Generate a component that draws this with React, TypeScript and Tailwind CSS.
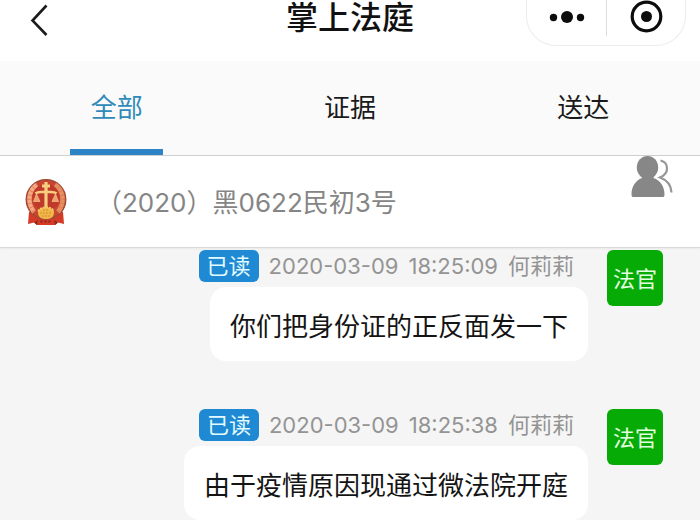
import clsx from "clsx";

const tabs = ["全部", "证据", "送达"];

const messages = [
  { date: "2020-03-09", time: "18:25:09", name: "何莉莉", role: "法官", text: "你们把身份证的正反面发一下" },
  { date: "2020-03-09", time: "18:25:38", name: "何莉莉", role: "法官", text: "由于疫情原因现通过微法院开庭" },
];

const CourtEmblem = () => (
  <svg className="h-12 w-[42px] shrink-0" viewBox="0 0 42 48" aria-hidden="true">
    {/* ribbon */}
    <path d="M4 34 L3 46 L9 44.500 L12 47 L30 47 L33 44.500 L39 46 L38 34 Z" fill="#d43a26" />
    <path d="M9 44.500 L13 42 L12 47 Z M33 44.500 L29 42 L30 47 Z" fill="#8f2a1c" />
    <circle cx="21" cy="21.500" r="19.700" fill="#c9452f" stroke="#a04a35" strokeWidth="1.500" />
    {/* wheat */}
    <path d="M12 6.500 C3 13 2 25 9 34" fill="none" stroke="#f4a984" strokeWidth="4.500" />
    <path d="M30 6.500 C39 13 40 25 33 34" fill="none" stroke="#e58f62" strokeWidth="4.500" />
    <path d="M12 6.500 C3 13 2 25 9 34 M30 6.500 C39 13 40 25 33 34" fill="none" stroke="#dd7650" strokeWidth="4.500" strokeDasharray="0.700 3.500" />
    <circle cx="21" cy="19.500" r="13.500" fill="#bf3a2a" />
    {/* scales */}
    <path d="M21 4 V31" stroke="#f8cf80" strokeWidth="3.200" />
    <path d="M17 8 H25" stroke="#f8cf80" strokeWidth="3" />
    <path d="M10.500 15.500 C14 12.500 18 15 21 13.500 C24 15 28 12.500 31.500 15.500" fill="none" stroke="#f8cf80" strokeWidth="2.600" />
    <path d="M11.500 16 L8.500 23.500 H15 Z M30.500 16 L27 23.500 H33.500 Z" fill="#f0a070" stroke="#f3bd7b" strokeWidth="0.800" />
    {/* gear */}
    <path d="M13 34 C14 27.500 28 27.500 29 34 C29 40 25 41 21 41 C17 41 13 40 13 34 Z" fill="#f2b548" />
    <path d="M13.500 33.500 C14.500 28 27.500 28 28.500 33.500" fill="none" stroke="#f7cc6a" strokeWidth="2" strokeDasharray="2 1" />
    <path d="M15 35 H27 M17 38 H25 M18 32 H24" stroke="#cf8c30" strokeWidth="0.900" strokeDasharray="2 1" />
    <path d="M15 43.500 H27" stroke="#a52a1b" strokeWidth="1.800" strokeDasharray="3 1" />
  </svg>
);

const PeopleIcon = () => (
  <svg className="h-[42px] w-[42px]" viewBox="0 0 42 42" aria-hidden="true">
    <ellipse cx="16.500" cy="11.500" rx="10.700" ry="11.500" fill="#878787" />
    <path
      d="M11 20 H22.500 V22 C29.500 24.500 33.500 31 33.500 38 C33.500 40.500 33 41 31 41 H3 C1 41 0.500 40.500 0.500 38 C0.500 31 4.500 24.500 11 22 Z"
      fill="#878787"
    />
    <path
      d="M29.500 4.500 C34 5.500 36 9 36 12.500 C36 16.500 33.500 19.500 29 21.500 C36 24 40 29 40.500 36.500"
      fill="none"
      stroke="#969696"
      strokeWidth="2.200"
    />
  </svg>
);

const Header = () => (
  <header className="grid h-[61px] grid-cols-[1fr_auto_1fr] items-start bg-white">
    <button type="button" aria-label="返回" className="ml-6 h-10 w-8">
      <svg className="h-10 w-8" viewBox="0 0 32 40" aria-hidden="true">
        <path d="M22.500 5.500 L8.500 20.500 L22.500 35" fill="none" stroke="#1c1c1c" strokeWidth="2.600" />
      </svg>
    </button>

    <h1 className="text-[32px] leading-9 font-medium text-[#111]">掌上法庭</h1>

    <div className="mr-[14px] flex h-[46px] w-40 justify-self-end rounded-b-[30px] border border-t-0 border-[#ececec]">
      <button type="button" aria-label="更多" className="h-9 w-20 border-r border-[#dcdcdc]">
        <svg className="h-9 w-20" viewBox="0 0 80 36" fill="#0c0c0c" aria-hidden="true">
          <circle cx="26.500" cy="17.500" r="3.700" />
          <circle cx="40" cy="17" r="6" />
          <circle cx="53.500" cy="17.500" r="3.700" />
        </svg>
      </button>
      <button type="button" aria-label="关闭" className="h-9 w-20">
        <svg className="h-9 w-20" viewBox="0 0 80 36" aria-hidden="true">
          <circle cx="39.500" cy="16.500" r="14.300" fill="none" stroke="#0c0c0c" strokeWidth="3.200" />
          <circle cx="39.500" cy="16.500" r="5.500" fill="#0c0c0c" />
        </svg>
      </button>
    </div>
  </header>
);

const App = () => {
  return (
    <div className="flex min-h-screen flex-col bg-[#f5f5f5] font-['Inter','Noto_Sans_CJK_SC',sans-serif]">
      <Header />

      {/* Tabs */}
      <nav className="grid h-[95px] grid-cols-3 border-b border-[#cfcfcf] bg-[#fafafa]">
        {tabs.map((tab, i) => (
          <button
            key={tab}
            type="button"
            className={clsx(
              "flex flex-col items-center text-[26px]",
              i === 0 ? "text-[#2f8ab8]" : "text-[#1a1a1a]"
            )}
          >
            <span className="flex flex-1 items-center pt-1">{tab}</span>
            <span className={clsx("h-1.5 w-2/5", i === 0 && "bg-[#2c83c6]")} />
          </button>
        ))}
      </nav>

      {/* Case number */}
      <section className="flex h-[92px] items-center border-b border-[#d9d9d9] bg-white pr-[27px] pl-[25px] shadow-xs">
        <CourtEmblem />
        <h2 className="ml-[29px] flex-1 pt-0.5 text-[26px] text-[#858585]">（2020）黑0622民初3号</h2>
        <button type="button" aria-label="参与人" className="self-start">
          <PeopleIcon />
        </button>
      </section>

      {/* Messages */}
      <main className="flex flex-col gap-12 pt-0.5">
        {messages.map((msg) => (
          <article key={msg.time} className="flex items-start justify-end gap-[19px] pr-[37px]">
            <div className="flex flex-col items-end gap-[5px]">
              <div className="flex h-8 items-center gap-2.5 pr-3.5 text-[22px] leading-8 text-[#949494]">
                <span className="flex h-8 w-[60px] items-center justify-center rounded-md bg-[#1f89d4] text-[#e2fbff]">
                  已读
                </span>
                <time className="flex gap-2.5">
                  <span>{msg.date}</span>
                  <span>{msg.time}</span>
                </time>
                <span>{msg.name}</span>
              </div>
              <p className="rounded-2xl bg-white px-5 pt-[22px] pb-4 text-[26px] leading-9 text-[#141414]">
                {msg.text}
              </p>
            </div>
            <span className="flex size-14 items-center justify-center rounded-md bg-[#06ab06] pt-0.5 text-[22px] text-[#e4ffe0]">
              {msg.role}
            </span>
          </article>
        ))}
      </main>
    </div>
  );
};

export default App;
